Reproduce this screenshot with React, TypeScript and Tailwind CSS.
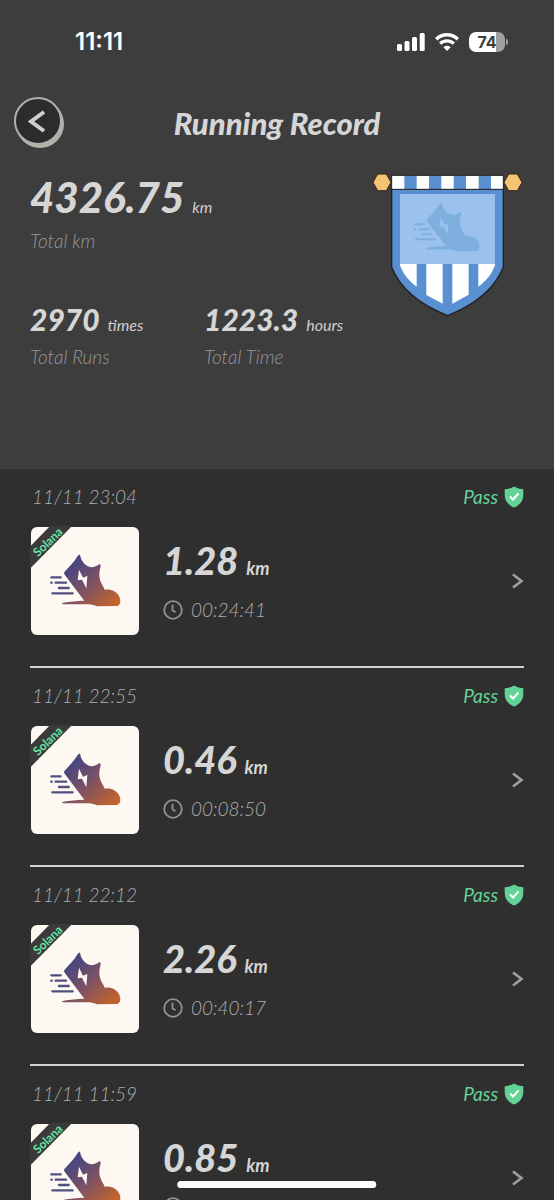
import { useId } from "react"

const SHOE =
  "M165 103C168 122 180 136 196 140C208 143 217 136 222 132Q228 131 227 138C223 154 221 164 225 178C229 192 237 200 239 208C258 205 276 213 283 229C290 245 284 257 274 257L215 258C207 254 195 252 186 252L116 252Q106 250 116 247C134 243 156 242 178 241L119 163Q115 158 119 154C132 140 148 124 158 107Q163 101 165 103Z"
const BOLT = "M162 148L158 180L171 178L184 204L187 167L174 172Z"

const records = [
  { date: "11/11 23:04", km: "1.28", time: "00:24:41" },
  { date: "11/11 22:55", km: "0.46", time: "00:08:50" },
  { date: "11/11 22:12", km: "2.26", time: "00:40:17" },
  { date: "11/11 11:59", km: "0.85", time: "" },
]

function SpeedLines() {
  return (
    <g strokeWidth="7" strokeLinecap="round">
      <path d="M79 171H107M79 187H80M92 187H123M102 203H131M82 219H143" />
    </g>
  )
}

function StatusBar() {
  return (
    <div className="flex items-center justify-between pt-[26px] pr-[46px] pl-[75px] font-['Inter',sans-serif] text-white">
      <span className="text-2xl leading-8 font-semibold">11:11</span>
      <div className="flex items-center gap-[10px]">
        <svg width="28" height="18" viewBox="0 0 28 18" fill="currentColor">
          <rect x="0" y="11" width="5" height="7" rx="1.5" />
          <rect x="7.5" y="8" width="5" height="10" rx="1.5" />
          <rect x="15" y="4" width="5" height="14" rx="1.5" />
          <rect x="22.7" y="0" width="5" height="18" rx="1.5" />
        </svg>
        <svg width="24" height="18" viewBox="0 0 24 18" fill="none" stroke="currentColor" strokeWidth="3.4">
          <path d="M1.2 6.3C7.3 .2 16.7 .2 22.8 6.3" />
          <path d="M5.2 10.6C9 6.9 15 6.9 18.8 10.6" />
          <path d="M12 18L8.400 14.200Q12 11.400 15.600 14.200Z" fill="currentColor" stroke="none" />
        </svg>
        <div className="flex items-center gap-px">
          <div className="flex h-5 w-9 items-center justify-center rounded-[7px] bg-linear-to-r from-white from-74% to-[#a0a0a0] to-74% text-base font-bold text-[#3d3d3d]">
            74
          </div>
          <div className="h-[6px] w-[2px] rounded-r-full bg-[#a0a0a0]" />
        </div>
      </div>
    </div>
  )
}

function Banner() {
  return (
    <svg className="shrink-0" width="151" height="144" viewBox="36 38 453 432">
      <path
        d="M95 86H430V320C402 392 337 436 263 466C188 436 123 392 95 320Z"
        fill="#5990cf"
        stroke="#202024"
        strokeWidth="4"
      />
      <path d="M120 101H405V311H120Z" fill="#9ac2ec" />
      <g transform="translate(91 32) scale(.935)" fill="#7fafdf" stroke="#7fafdf">
        <path d={SHOE} stroke="none" />
        <SpeedLines />
        <path d={BOLT} fill="#9ac2ec" stroke="none" />
      </g>
      <g fill="#fff">
        <path d="M120 311H170V379C146 362 129 340 120 315Z" />
        <path d="M199 311H248V430L199 404Z" />
        <path d="M277 311H326V403L277 430Z" />
        <path d="M355 311H405V315C396 340 379 362 355 379Z" />
      </g>
      <rect x="95" y="45" width="335" height="42" fill="#fff" />
      <path d="M133 45h37v42h-37zM207 45h37v42h-37zM281 45h37v42h-37zM356 45h37v42h-37z" fill="#5990cf" />
      <rect x="95" y="45" width="335" height="42" fill="none" stroke="#202024" strokeWidth="3" />
      <g fill="#f3c471" stroke="#33231f" strokeWidth="3" strokeLinejoin="round">
        <path d="M53 41H79L93 66L79 91H53L39 66Z" />
        <path d="M446 41H472L486 66L472 91H446L432 66Z" />
      </g>
    </svg>
  )
}

function Stat({ value, unit, label }: { value: string; unit: string; label: string }) {
  return (
    <div className="w-[174px] shrink-0 whitespace-nowrap">
      <div className="flex items-baseline gap-2 leading-9">
        <span className="text-[30px] font-black text-[#d6d6d6]">{value}</span>
        <span className="text-base text-[#cfcfcf]">{unit}</span>
      </div>
      <div className="mt-2 text-[19px] leading-6 font-light text-[#989898]">{label}</div>
    </div>
  )
}

function Sneaker() {
  const id = useId()
  return (
    <svg className="shrink-0 overflow-visible" width="108" height="108" viewBox="18 20 324 324">
      <defs>
        <linearGradient id={id} gradientUnits="userSpaceOnUse" x1="130" y1="130" x2="255" y2="265">
          <stop offset="0" stopColor="#414584" />
          <stop offset=".5" stopColor="#7f5262" />
          <stop offset="1" stopColor="#c4642b" />
        </linearGradient>
      </defs>
      <rect x="18" y="20" width="324" height="324" rx="18" fill="#fdf8f1" />
      <path d={SHOE} fill={`url(#${id})`} />
      <path d={BOLT} fill="#fdf8f1" />
      <g stroke="#50507f">
        <SpeedLines />
      </g>
      <path d="M14 146V80L76 16H142Z" fill="#3b3939" />
      <text
        transform="translate(39 111) rotate(-44)"
        className="font-['Lato',sans-serif] text-[36px] font-bold not-italic"
        fill="#63e6a6"
      >
        Solana
      </text>
    </svg>
  )
}

function RecordRow({ date, km, time }: { date: string; km: string; time: string }) {
  return (
    <a href="#" className="block border-b-2 border-[#d2d2d2] pt-4 pb-[31px]">
      <div className="flex items-center justify-between text-[19px] leading-6 font-light">
        <span className="pl-[2px] text-[#adadad]">{date}</span>
        <span className="flex items-center gap-[6px] font-normal text-[#63d297]">
          Pass
          <svg width="20" height="22" viewBox="0 0 20 22">
            <path d="M10 .5Q14 3 19.3 3.3V9C19.3 15 15.5 19.5 10 21.5C4.500 19.500 .7 15 .7 9V3.300Q6 3 10 .5Z" fill="#63d297" />
            <path d="M6 10.500L9 13.500L14.500 7.500" fill="none" stroke="#fff" strokeWidth="2" />
          </svg>
        </span>
      </div>
      <div className="mt-[18px] flex items-center">
        <div className="flex flex-1 items-center gap-6 pl-px">
          <Sneaker />
          <div>
            <div className="flex items-baseline gap-2 leading-10 text-[#d6d6d6]">
              <span className="text-[38px] font-black">{km}</span>
              <span className="text-lg font-bold">km</span>
            </div>
            <div className="mt-4 flex h-6 items-center gap-2 text-[19px] leading-6 font-light text-[#adadad]">
              <svg width="20" height="20" viewBox="0 0 20 20" fill="none" stroke="#929292" strokeWidth="1.8">
                <circle cx="10" cy="10" r="8.8" />
                <path d="M9.500 4.800V10.300L12.500 12.300" />
              </svg>
              {time}
            </div>
          </div>
        </div>
        <svg width="12" height="16" viewBox="0 0 12 16" fill="none" stroke="#a0a0a0" strokeWidth="2.6">
          <path d="M1 1.500L9.500 8L1 14.500" />
        </svg>
      </div>
    </a>
  )
}

export default function App() {
  return (
    <div className="relative flex h-screen flex-col overflow-hidden bg-[#2f2f2f] font-['Lato',sans-serif] italic">
      <header className="shrink-0 bg-[#3d3d3d] pb-[100px]">
        <div className="not-italic">
          <StatusBar />
        </div>
        <div className="mt-[39px] grid grid-cols-[1fr_auto_1fr] items-center px-[14px]">
          <button
            type="button"
            aria-label="Back"
            className="flex size-12 items-center justify-center rounded-full border-2 border-[#b3b1ad] bg-[#2c2c2c] pr-[3px] shadow-[2px_3px_0_#b3afa9]"
          >
            <svg width="18" height="24" viewBox="0 0 18 24" fill="none" stroke="#d0d0d0" strokeWidth="4">
              <path d="M16 3L3 12.500L16 22" />
            </svg>
          </button>
          <h1 className="pt-1 text-[31px] leading-9 font-black text-[#d6d6d6]">Running Record</h1>
        </div>
        <div className="mt-7 flex justify-between pr-[31px] pl-[30px]">
          <div className="w-0 whitespace-nowrap">
            <div className="flex items-baseline gap-2 leading-[48px]">
              <span className="text-[42px] font-black text-[#d6d6d6]">4326.75</span>
              <span className="text-base text-[#cfcfcf]">km</span>
            </div>
            <div className="mt-2 text-[19px] leading-6 font-light text-[#989898]">Total km</div>
            <div className="mt-12 flex">
              <Stat value="2970" unit="times" label="Total Runs" />
              <Stat value="1223.3" unit="hours" label="Total Time" />
            </div>
          </div>
          <Banner />
        </div>
      </header>
      <main className="px-[30px]">
        {records.map((r) => (
          <RecordRow key={r.date} {...r} />
        ))}
      </main>
      <div className="absolute bottom-3 left-1/2 h-[7px] w-[36%] -translate-x-1/2 rounded-full bg-white" />
    </div>
  )
}
